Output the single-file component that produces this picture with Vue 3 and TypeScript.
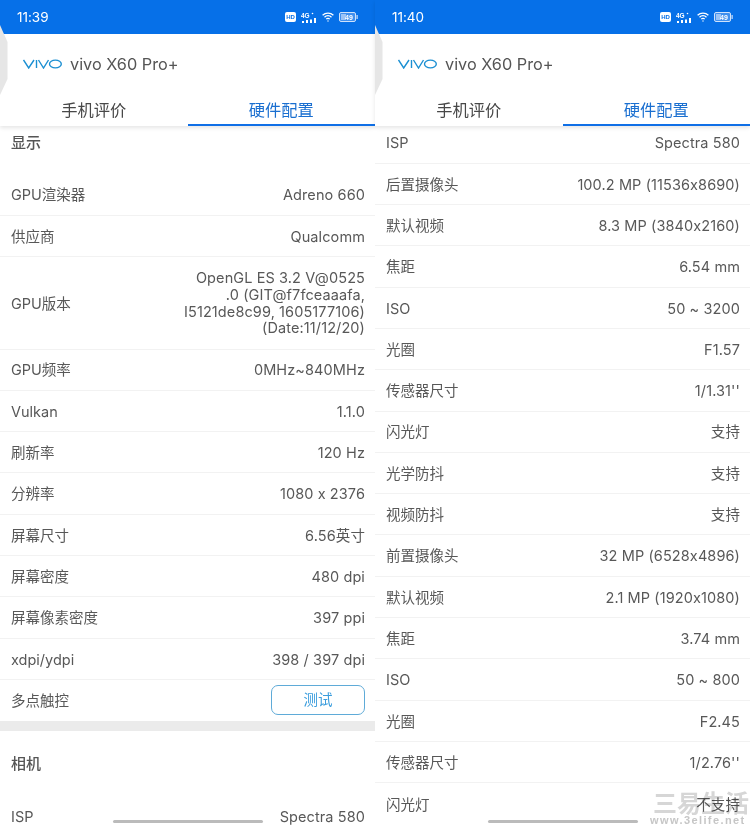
<script setup lang="ts">
interface Row {
  label: string;
  value?: string;
  button?: string;
  tall?: boolean;
}

interface Section {
  title?: string;
  rows: Row[];
}

interface Panel {
  time: string;
  scrollClass: string;
  sections: Section[];
}

const panels: Panel[] = [
  {
    time: '11:39',
    scrollClass: 'scroll-a',
    sections: [
      {
        title: '显示',
        rows: [
          { label: 'GPU渲染器', value: 'Adreno 660' },
          { label: '供应商', value: 'Qualcomm' },
          {
            label: 'GPU版本',
            value: 'OpenGL ES 3.2 V@0525\n.0 (GIT@f7fceaaafa,\nI5121de8c99, 1605177106)\n(Date:11/12/20)',
            tall: true
          },
          { label: 'GPU频率', value: '0MHz~840MHz' },
          { label: 'Vulkan', value: '1.1.0' },
          { label: '刷新率', value: '120 Hz' },
          { label: '分辨率', value: '1080 x 2376' },
          { label: '屏幕尺寸', value: '6.56英寸' },
          { label: '屏幕密度', value: '480 dpi' },
          { label: '屏幕像素密度', value: '397 ppi' },
          { label: 'xdpi/ydpi', value: '398 / 397 dpi' },
          { label: '多点触控', button: '测试' }
        ]
      },
      {
        title: '相机',
        rows: [{ label: 'ISP', value: 'Spectra 580' }]
      }
    ]
  },
  {
    time: '11:40',
    scrollClass: 'scroll-b',
    sections: [
      {
        rows: [
          { label: 'ISP', value: 'Spectra 580' },
          { label: '后置摄像头', value: '100.2 MP (11536x8690)' },
          { label: '默认视频', value: '8.3 MP (3840x2160)' },
          { label: '焦距', value: '6.54 mm' },
          { label: 'ISO', value: '50 ~ 3200' },
          { label: '光圈', value: 'F1.57' },
          { label: '传感器尺寸', value: "1/1.31''" },
          { label: '闪光灯', value: '支持' },
          { label: '光学防抖', value: '支持' },
          { label: '视频防抖', value: '支持' },
          { label: '前置摄像头', value: '32 MP (6528x4896)' },
          { label: '默认视频', value: '2.1 MP (1920x1080)' },
          { label: '焦距', value: '3.74 mm' },
          { label: 'ISO', value: '50 ~ 800' },
          { label: '光圈', value: 'F2.45' },
          { label: '传感器尺寸', value: "1/2.76''" },
          { label: '闪光灯', value: '不支持' }
        ]
      }
    ]
  }
];
</script>

<template>
  <div class="page">
    <div v-for="panel in panels" :key="panel.time" class="panel">
      <div class="top">
        <div class="status">
          <span class="time">{{ panel.time }}</span>
          <div class="status-icons">
            <svg width="11" height="10" viewBox="0 0 11 10">
              <rect width="11" height="10" rx="2" fill="#fff" />
              <text x="5.5" y="7.2" text-anchor="middle" class="hd">HD</text>
            </svg>
            <svg width="16" height="11" viewBox="0 0 16 11">
              <text x="0" y="5.5" class="net">4G</text>
              <circle cx="11.5" cy="1.5" r="0.8" fill="#fff" />
              <rect x="1" y="9" width="2" height="2" fill="#fff" />
              <rect x="5" y="8" width="2" height="3" fill="#fff" />
              <rect x="9" y="7.5" width="2" height="3.5" fill="#fff" />
              <rect x="13" y="6" width="2" height="5" fill="#fff" />
            </svg>
            <svg width="12" height="10" viewBox="0 0 12 10" fill="none" stroke="#fff" stroke-width="1.3">
              <path d="M0.6 3.2a7.8 7.8 0 0 1 10.8 0" />
              <path d="M2.5 5.2a5 5 0 0 1 7 0" />
              <path d="M4.3 7.1a2.4 2.4 0 0 1 3.4 0" />
              <circle cx="6" cy="9" r="0.7" fill="#fff" stroke="none" />
            </svg>
            <svg width="19" height="10" viewBox="0 0 19 10">
              <rect x="0.5" y="0.5" width="16" height="9" rx="1.5" fill="#3f8fee" stroke="#cfe2fb" />
              <rect x="2" y="2" width="5" height="6" fill="#9cc4f6" />
              <rect x="17.5" y="3" width="1.2" height="4" fill="#cfe2fb" />
              <text x="10" y="7.8" text-anchor="middle" class="batt">49</text>
            </svg>
          </div>
        </div>
        <div class="brand">
          <svg class="logo" width="39" height="10" viewBox="0 0 39 10" fill="none" stroke="#1b8fd2" stroke-width="1.4">
            <path d="M0.5 1L5.7 9L11 1" />
            <path d="M13.5 1V9" />
            <path d="M15.5 1L20.5 9L25.5 1" />
            <ellipse cx="32.4" cy="5" rx="5.9" ry="3.9" />
          </svg>
          <span class="model">vivo X60 Pro+</span>
        </div>
        <div class="tabs">
          <div class="tab">手机评价</div>
          <div class="tab active">硬件配置</div>
        </div>
        <svg class="edge" width="9" height="70" viewBox="0 0 9 70">
          <path d="M0 0L7.5 17V54L0 70Z" fill="#e6e6e6" />
        </svg>
      </div>

      <div class="body">
        <div :class="['scroll', panel.scrollClass]">
          <section v-for="(section, i) in panel.sections" :key="i" class="section">
            <h3 v-if="section.title" class="section-title">{{ section.title }}</h3>
            <div v-for="row in section.rows" :key="row.label + row.value" :class="['row', { tall: row.tall }]">
              <span class="label">{{ row.label }}</span>
              <button v-if="row.button" class="test-btn">{{ row.button }}</button>
              <span v-else class="value">{{ row.value }}</span>
            </div>
          </section>
        </div>
      </div>

      <div class="home-bar"></div>
    </div>

    <div class="watermark">
      <span class="wm-cn">三易生活</span>
      <span class="wm-en">www.3elife.net</span>
    </div>
  </div>
</template>

<style>
html,
body {
  margin: 0;
  background: #fff;
}
</style>

<style scoped>
.page {
  position: relative;
  display: flex;
  width: 750px;
  height: 825px;
  overflow: hidden;
  font-family: Inter, "Noto Sans CJK SC", sans-serif;
  font-feature-settings: "calt" 0;
  color: #585858;
}

.panel {
  position: relative;
  display: flex;
  flex-direction: column;
  width: 375px;
  height: 825px;
  background: #fff;
}

.top {
  position: relative;
  z-index: 2;
  flex: none;
  background: #fff;
  box-shadow: 0 2px 4px rgba(0, 0, 0, 0.1);
}

.status {
  display: flex;
  align-items: center;
  justify-content: space-between;
  height: 34px;
  padding: 0 17px;
  background: #0670e8;
  box-sizing: border-box;
}

.time {
  font-size: 13.5px;
  color: #fff;
}

.status-icons {
  display: flex;
  align-items: center;
  gap: 5px;
}

.hd {
  font: 700 6px "Liberation Sans", sans-serif;
  fill: #0670e8;
}

.net {
  font: 700 6.5px "Liberation Sans", sans-serif;
  fill: #fff;
}

.batt {
  font: 700 7px "Liberation Sans", sans-serif;
  fill: #fff;
}

.brand {
  display: flex;
  align-items: center;
  gap: 8px;
  height: 60px;
  padding-left: 23px;
}

.model {
  font-size: 16.3px;
  color: #555;
}

.tabs {
  display: flex;
  height: 32px;
}

.tab {
  flex: 1;
  text-align: center;
  font-size: 16.25px;
  line-height: 32px;
  color: #484848;
  box-sizing: border-box;
}

.tab.active {
  color: #1a6fd0;
  border-bottom: 2px solid #0f6fe6;
}

.edge {
  position: absolute;
  left: 0;
  top: 25px;
}

.body {
  flex: 1;
  overflow: hidden;
}

.scroll-a {
  margin-top: -16px;
}

.scroll-b {
  margin-top: -3.5px;
}

.section + .section {
  border-top: 10px solid #ebebeb;
}

.section-title {
  margin: 0;
  padding: 22px 11px 20.5px;
  font-size: 15px;
  line-height: 22px;
  font-weight: 500;
  color: #555;
}

.row {
  display: flex;
  align-items: center;
  justify-content: space-between;
  height: 41.3px;
  padding: 1.5px 10px 0 11px;
  box-sizing: border-box;
  border-bottom: 1px solid #f2f2f2;
  font-size: 14.5px;
  line-height: 20px;
}

.row:last-child {
  border-bottom: none;
}

.row.tall {
  height: 92.5px;
}

.value {
  max-width: 190px;
  text-align: right;
  white-space: pre-line;
  letter-spacing: 0.1px;
}

.tall .value {
  line-height: 16.7px;
}

.test-btn {
  width: 94px;
  height: 30px;
  margin-top: -2px;
  padding: 0;
  background: #fff;
  border: 1px solid #5fabd8;
  border-radius: 7px;
  font: inherit;
  color: #3b9ddd;
}

.home-bar {
  position: absolute;
  z-index: 3;
  left: 113px;
  bottom: 2px;
  width: 150px;
  height: 3px;
  background: #bbb;
  border-radius: 2px;
}

.watermark {
  position: absolute;
  z-index: 4;
  right: 0;
  bottom: -1px;
  display: flex;
  flex-direction: column;
  align-items: flex-start;
  width: 100px;
  color: #d6d6d6;
  line-height: 1;
  mix-blend-mode: multiply;
}

.wm-cn {
  margin-left: 3px;
  font-size: 24px;
  font-weight: 700;
  line-height: 21px;
  white-space: nowrap;
}

.wm-en {
  font: 700 11px "Liberation Sans", sans-serif;
  letter-spacing: 1.4px;
  color: #c6c6c6;
  white-space: nowrap;
}
</style>
